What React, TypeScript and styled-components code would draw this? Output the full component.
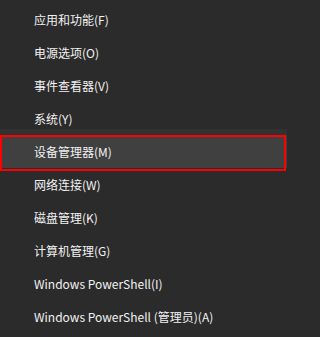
import styled, { createGlobalStyle } from "styled-components";

const items = [
  "应用和功能(F)",
  "电源选项(O)",
  "事件查看器(V)",
  "系统(Y)",
  "设备管理器(M)",
  "网络连接(W)",
  "磁盘管理(K)",
  "计算机管理(G)",
  "Windows PowerShell(I)",
  "Windows PowerShell (管理员)(A)",
];

const SELECTED = 4;

const GlobalStyle = createGlobalStyle`
  html, body {
    margin: 0;
    padding: 0;
    background: #2b2b2b;
  }
`;

function App(): JSX.Element {
  return (
    <>
      <GlobalStyle />
      <Menu>
        {items.map((label, index) => (
          <MenuItem key={index} $selected={index === SELECTED}>
            {label}
          </MenuItem>
        ))}
      </Menu>
    </>
  );
}

export default App;

const Menu = styled.ul`
  list-style: none;
  margin: 0;
  padding: 3px 0 0;
  width: 287px;
  height: 337px;
  box-sizing: border-box;
  background: #2b2b2b;
  font-family: "Noto Sans CJK SC", "Noto Sans", sans-serif;
  font-size: 12px;
  color: #f2f2f2;
  overflow: hidden;
`;

const MenuItem = styled.li<{ $selected: boolean }>`
  position: relative;
  display: flex;
  align-items: center;
  height: 33px;
  padding-left: 34px;
  background: ${({ $selected }) => ($selected ? "#404040" : "transparent")};

  ${({ $selected }) =>
    $selected &&
    `
    &::before {
      content: "";
      position: absolute;
      left: 0;
      right: 0;
      top: -6px;
      height: 6px;
      background: #323232;
    }
    &::after {
      content: "";
      position: absolute;
      left: 0;
      right: 1px;
      top: 0;
      bottom: -3px;
      border: 2px solid #ff0000;
      pointer-events: none;
    }
  `}
`;
